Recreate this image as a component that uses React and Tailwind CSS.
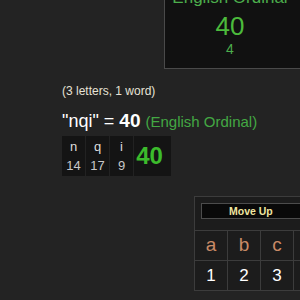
const letters = [
  { ch: "n", val: 14 },
  { ch: "q", val: 17 },
  { ch: "i", val: 9 },
];

const grid = [
  ["a", "1"],
  ["b", "2"],
  ["c", "3"],
  ["", ""],
];

export default function App() {
  return (
    <div
      className="w-[300px] h-[300px] overflow-hidden bg-[#232323] text-white"
      style={{ fontFamily: '"Liberation Sans", Arial, sans-serif' }}
    >
      {/* top result card, cropped by the window */}
      <div className="flex">
        <div className="ml-[164px] w-[160px] h-[69px] shrink-0 bg-[#111111] border-l border-b border-[#4a4a4a] overflow-hidden">
          <div className="w-[130px] -mt-[12px] flex flex-col items-center">
            <div className="text-[17px] leading-[20px] text-[#4cae4c]">English Ordinal</div>
            <div className="text-[26px] leading-[30px] mt-[3px] text-[#4cbb3c]">40</div>
            <div className="text-[14px] leading-[16px] text-[#4cae4c]">4</div>
          </div>
        </div>
      </div>

      {/* summary */}
      <div className="pl-[62px] mt-[14px]">
        <div className="text-[12px] leading-[16px] text-[#e6e2d6]">(3 letters, 1 word)</div>
        <div className="mt-[11px] flex items-baseline gap-[5px] text-[18px] leading-[22px]">
          <span className="text-white">"nqi" = <b className="text-[19px]">40</b></span>
          <span className="text-[15px] text-[#43a843]">(English Ordinal)</span>
        </div>
        <div className="mt-[3px] flex w-[109px] h-[40px] bg-[#141414]">
          {letters.map((l) => (
            <div
              key={l.ch}
              className="w-[24px] flex flex-col items-center justify-center border-r border-[#222] text-[13px] leading-[19px] text-[#dddddd]"
            >
              <span>{l.ch}</span>
              <span className="text-[#c8c8c8]">{l.val}</span>
            </div>
          ))}
          <div className="flex-1 flex items-center justify-center pr-[6px] text-[24px] font-bold text-[#3cbb2c]">
            40
          </div>
        </div>
      </div>

      {/* cipher table */}
      <div className="ml-[194px] mt-[20px] w-[140px] bg-[#1c1c1c] border-l border-t border-[#3c3c3c]">
        <div className="px-[6px] pt-[6px] pb-[11px]">
          <div className="h-[16px] bg-[#090909] border border-[#4c4c4c] text-[#f0e6a0] text-[10.5px] font-bold leading-[14px] pl-[27px]">
            Move Up
          </div>
        </div>
        <div className="flex border-t border-[#3c3c3c]">
          {grid.map(([ch, num], i) => (
            <div key={i} className="w-[33px] shrink-0 border-r border-[#3c3c3c]">
              <div className="h-[30px] flex items-center justify-center text-[19px] text-[#c98a66] border-b border-[#3c3c3c]">
                {ch}
              </div>
              <div className="h-[30px] flex items-center justify-center text-[17px] text-white border-b border-[#3c3c3c]">
                {num}
              </div>
            </div>
          ))}
        </div>
      </div>
    </div>
  );
}
